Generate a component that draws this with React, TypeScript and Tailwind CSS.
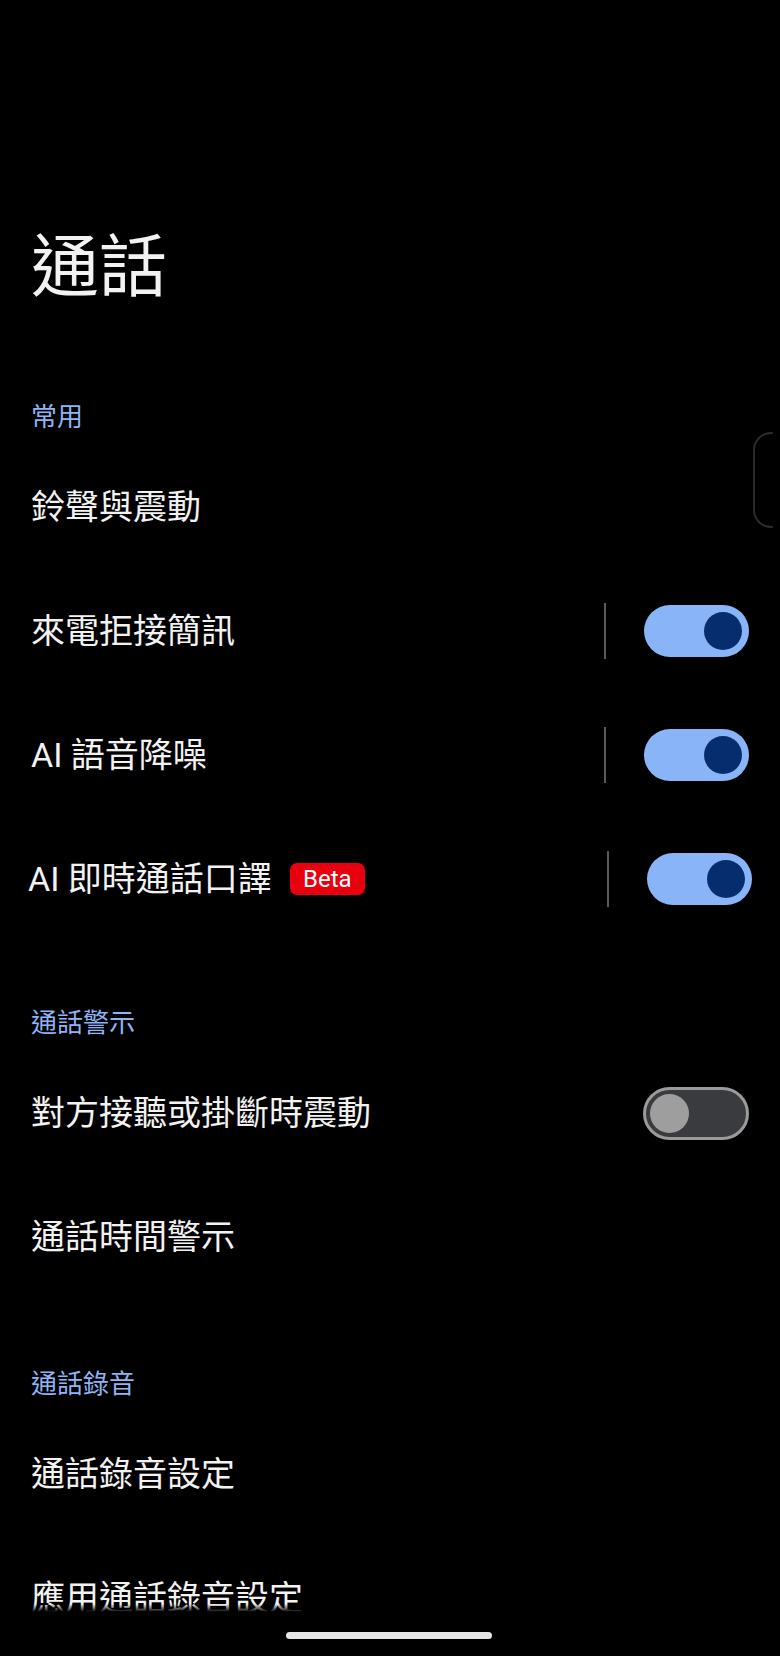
import React from "react";

const font = { fontFamily: 'Roboto, "Noto Sans CJK TC", sans-serif' };

function Toggle({ on }: { on: boolean }) {
  if (on) {
    return (
      <div className="flex h-[52px] w-[105px] items-center justify-end rounded-full bg-[#8ab4f8] pr-[7px]">
        <div className="h-[38px] w-[38px] rounded-full bg-[#062e6f]" />
      </div>
    );
  }
  return (
    <div className="flex h-[53px] w-[106px] items-center justify-start rounded-full border-[3px] border-[#9b9b9b] bg-[#3a3b3f] pl-[4px]">
      <div className="h-[39px] w-[39px] rounded-full bg-[#9e9e9e]" />
    </div>
  );
}

function Header({ children }: { children: React.ReactNode }) {
  return (
    <div className="flex h-[56px] items-center pl-[31px] text-[26px] leading-none text-[#8fb4f5]">
      {children}
    </div>
  );
}

function Row({
  label,
  toggle,
  divider,
  badge,
  shifted,
}: {
  label: string;
  toggle?: boolean;
  divider?: boolean;
  badge?: string;
  shifted?: boolean;
}) {
  return (
    <div
      className={`flex h-[124px] items-center ${
        shifted ? "pl-[28px] pr-[28px]" : "pl-[31px] pr-[31px]"
      }`}
    >
      <div className="flex flex-1 items-center gap-[18px]">
        <span className="text-[34px] leading-none text-[#f2f2f2]">{label}</span>
        {badge && (
          <span className="flex h-[32px] w-[75px] items-center justify-center rounded-[7px] bg-[#e8000f] text-[24px] leading-none text-white">
            {badge}
          </span>
        )}
      </div>
      {divider && <div className="mr-[38px] h-[56px] w-[2px] bg-[#5a5a5a]" />}
      {toggle !== undefined && <Toggle on={toggle} />}
    </div>
  );
}

export default function App() {
  return (
    <div
      className="relative h-[1656px] w-[780px] overflow-hidden bg-black"
      style={font}
    >
      <div className="pl-[31px] pt-[234px] text-[68px] leading-[68px] text-[#f2f2f2]">
        通話
      </div>

      <div className="mt-[87px]">
        <Header>常用</Header>
        <Row label="鈴聲與震動" />
        <Row label="來電拒接簡訊" divider toggle={true} />
        <Row label="AI 語音降噪" divider toggle={true} />
        <Row label="AI 即時通話口譯" badge="Beta" divider toggle={true} shifted />
      </div>

      <div className="mt-[54px]">
        <Header>通話警示</Header>
        <Row label="對方接聽或掛斷時震動" toggle={false} />
        <Row label="通話時間警示" />
      </div>

      <div className="mt-[57px]">
        <Header>通話錄音</Header>
        <Row label="通話錄音設定" />
        <Row label="應用通話錄音設定" />
      </div>

      {/* edge panel handle */}
      <div className="absolute left-[753px] top-[432px] h-[96px] w-[20px] rounded-l-[18px] border-y-2 border-l-2 border-[#2a2a2a]" />

      {/* bottom fade + gesture bar */}
      <div className="absolute left-0 top-[1604px] h-[52px] w-full bg-gradient-to-b from-transparent to-black to-[15%]" />
      <div className="absolute left-[286px] top-[1632px] h-[7px] w-[206px] rounded-full bg-[#e6e6e6]" />
    </div>
  );
}
